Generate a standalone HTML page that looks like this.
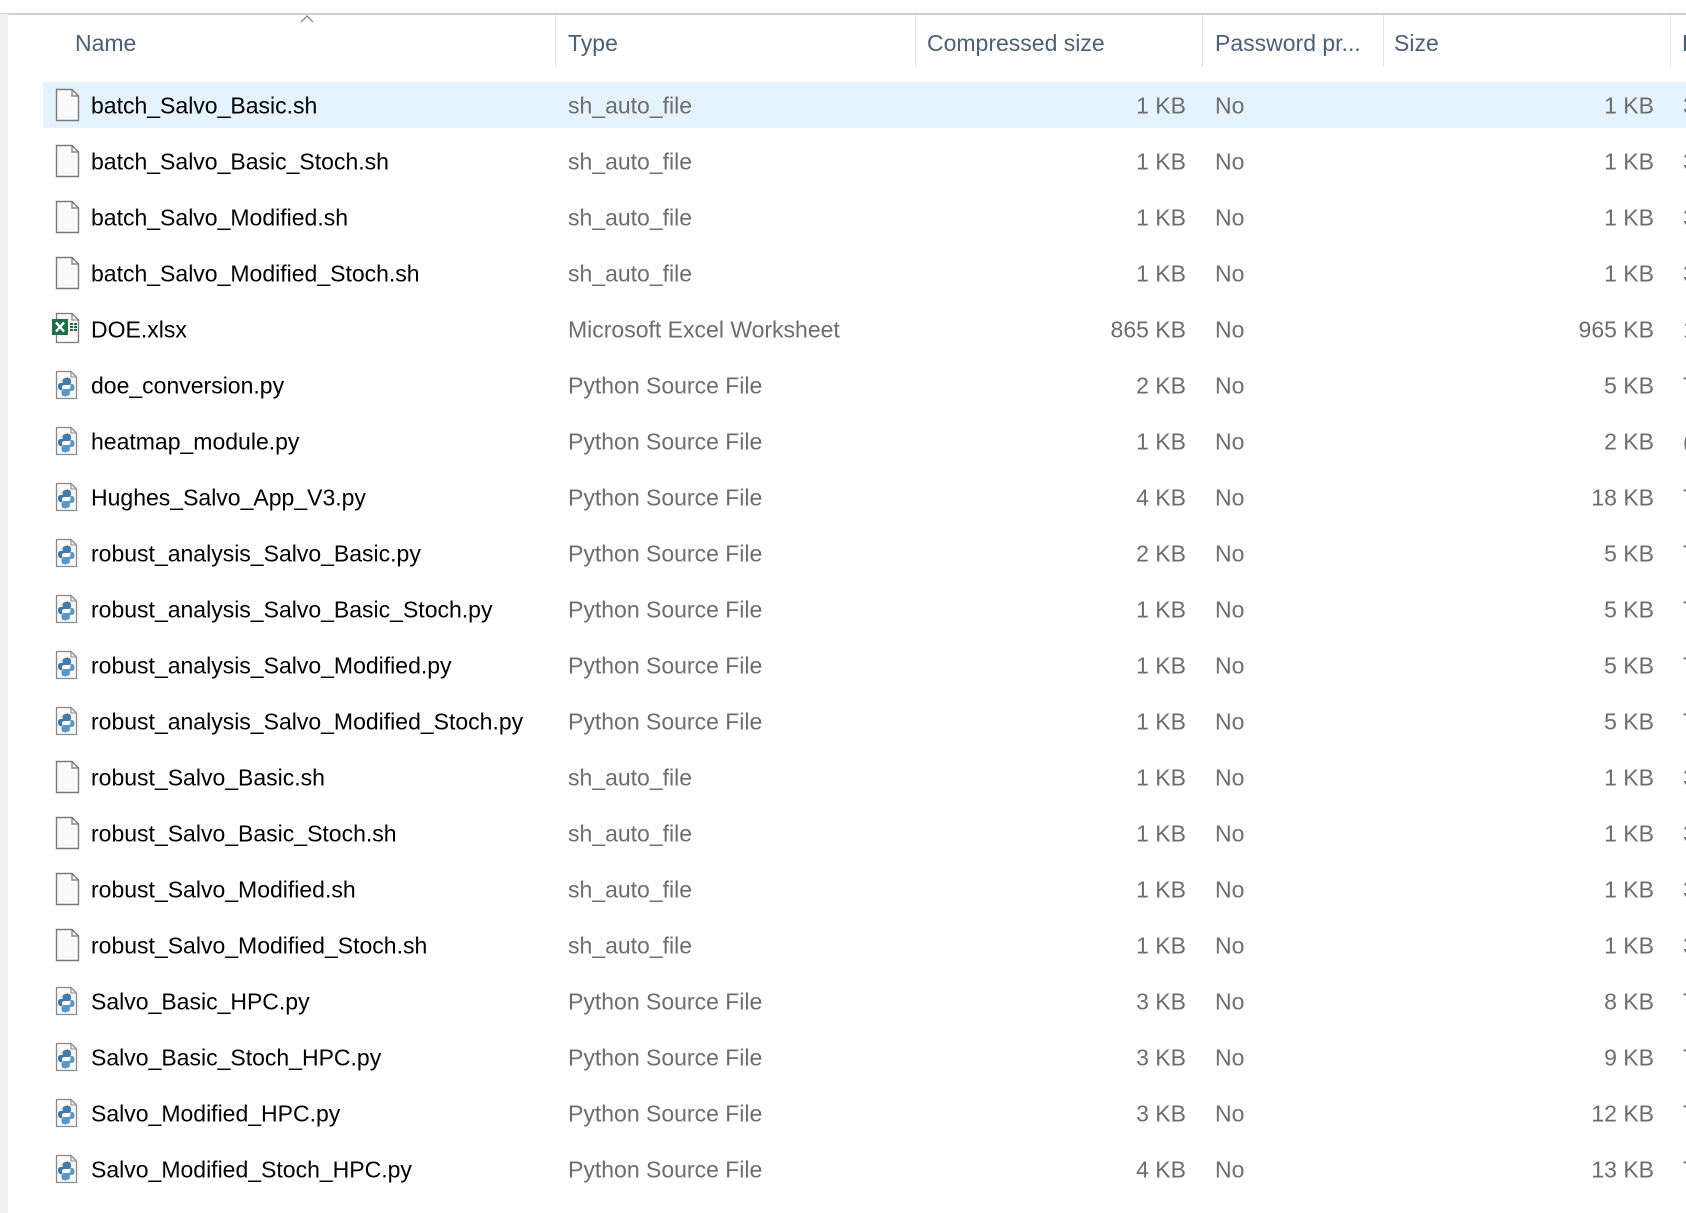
<!DOCTYPE html>
<html><head><meta charset="utf-8">
<style>
html,body{margin:0;padding:0;width:1686px;height:1213px;overflow:hidden;background:#fff;font-family:"Liberation Sans",sans-serif;}
.strip{position:absolute;left:0;top:14px;width:8px;height:1199px;background:#f0f0f0;}
.topline{position:absolute;left:0;top:13px;width:1686px;height:2px;background:#c9d4e0;}
.hdr{position:absolute;top:30px;font-size:23px;color:#4c607a;white-space:nowrap;}
.sep{position:absolute;top:15px;width:1px;height:52px;background:#e5e5e5;}
.row{position:absolute;left:0;width:1686px;height:46px;}
.sel{background:#e5f3ff;left:43px;width:1643px;}
.t{position:absolute;top:50%;transform:translateY(-50%);margin-top:1px;font-size:23px;white-space:nowrap;line-height:1;}
.n{left:91px;color:#000;}
.ty{left:568px;color:#6d6d6d;}
.cs{right:500px;color:#6d6d6d;}
.pw{left:1215px;color:#6d6d6d;}
.sz{right:32px;color:#6d6d6d;}
.dt{left:1683px;color:#6d6d6d;}
.ic{position:absolute;left:50px;top:50%;transform:translateY(-50%);}
</style></head><body>
<div class="topline"></div>
<div class="strip"></div>
<svg style="position:absolute;left:300px;top:14px" width="14" height="9"><path d="M1 8 L7 2 L13 8" fill="none" stroke="#8a8a8a" stroke-width="1.3"/></svg>
<div class="hdr" style="left:75px">Name</div>
<div class="sep" style="left:555px"></div>
<div class="hdr" style="left:568px">Type</div>
<div class="sep" style="left:915px"></div>
<div class="hdr" style="left:927px">Compressed size</div>
<div class="sep" style="left:1202px"></div>
<div class="hdr" style="left:1215px">Password pr...</div>
<div class="sep" style="left:1383px"></div>
<div class="hdr" style="left:1394px">Size</div>
<div class="sep" style="left:1670px"></div>
<div class="hdr" style="left:1682px">D</div>
<div id="rows"></div>
<script>
var sh='<svg class="ic" width="32" height="34" viewBox="0 0 32 34"><path d="M6.5 1.5 H22 L28.5 8 V32.5 H6.5 Z" fill="#fafafa" stroke="#7a7a7a" stroke-width="1.4"/><path d="M22 1.5 V8 H28.5" fill="none" stroke="#7a7a7a" stroke-width="1.2"/></svg>';
var py='<svg class="ic" width="32" height="34" viewBox="0 0 32 34"><path d="M6.5 3.5 H21 L26.5 9 V30.5 H6.5 Z" fill="#fafafa" stroke="#8a8a8a" stroke-width="1.3"/><path d="M21 3.5 V9 H26.5" fill="none" stroke="#8a8a8a" stroke-width="1.1"/><path d="M16.5 10 c-3 0 -4 1 -4 3 v2 h-2 c-2 0 -2.5 2 -2.5 3.5 s0.5 3.5 2.5 3.5 h1.5 v-2.5 c0-1.5 1-2.5 2.5-2.5 h4 c1.5 0 2.5-1 2.5-2.5 v-2 c0-2-1.5-3-4.5-3 z" fill="#3f7cad"/><path d="M16 28 c3 0 4-1 4-3 v-2 h2 c2 0 2.5-2 2.5-3.5 s-0.5-3.5-2.5-3.5 h-1.5 v2.5 c0 1.5-1 2.5-2.5 2.5 h-4 c-1.5 0-2.5 1-2.5 2.5 v2 c0 2 1.5 3 4.5 3 z" fill="#5d97c4"/></svg>';
var xl='<svg class="ic" width="32" height="34" viewBox="0 0 32 34"><path d="M6.5 1.5 H22 L28.5 8 V30.5 H6.5 Z" fill="#fafafa" stroke="#7a7a7a" stroke-width="1.3"/><path d="M22 1.5 V8 H28.5" fill="none" stroke="#7a7a7a" stroke-width="1.1"/><g fill="#1e7145"><rect x="20" y="11" width="3" height="2"/><rect x="24" y="11" width="3" height="2"/><rect x="20" y="14" width="3" height="2"/><rect x="24" y="14" width="3" height="2"/><rect x="20" y="17" width="3" height="2"/><rect x="24" y="17" width="3" height="2"/></g><rect x="2" y="7" width="16" height="16" fill="#1e7145"/><path d="M6 10.5 L14 19.5 M14 10.5 L6 19.5" stroke="#fff" stroke-width="2.4"/></svg>';
var d=[
['batch_Salvo_Basic.sh','sh','1','1','3'],
['batch_Salvo_Basic_Stoch.sh','sh','1','1','3'],
['batch_Salvo_Modified.sh','sh','1','1','3'],
['batch_Salvo_Modified_Stoch.sh','sh','1','1','3'],
['DOE.xlsx','xl','865','965','1'],
['doe_conversion.py','py','2','5','T'],
['heatmap_module.py','py','1','2','('],
['Hughes_Salvo_App_V3.py','py','4','18','T'],
['robust_analysis_Salvo_Basic.py','py','2','5','T'],
['robust_analysis_Salvo_Basic_Stoch.py','py','1','5','T'],
['robust_analysis_Salvo_Modified.py','py','1','5','T'],
['robust_analysis_Salvo_Modified_Stoch.py','py','1','5','T'],
['robust_Salvo_Basic.sh','sh','1','1','3'],
['robust_Salvo_Basic_Stoch.sh','sh','1','1','3'],
['robust_Salvo_Modified.sh','sh','1','1','3'],
['robust_Salvo_Modified_Stoch.sh','sh','1','1','3'],
['Salvo_Basic_HPC.py','py','3','8','T'],
['Salvo_Basic_Stoch_HPC.py','py','3','9','T'],
['Salvo_Modified_HPC.py','py','3','12','T'],
['Salvo_Modified_Stoch_HPC.py','py','4','13','T']];
var h='';
for(var i=0;i<d.length;i++){var r=d[i];var y=105+i*56-23;
var ic=r[1]=='sh'?sh:(r[1]=='py'?py:xl);
var ty=r[1]=='sh'?'sh_auto_file':(r[1]=='py'?'Python Source File':'Microsoft Excel Worksheet');
h+='<div class="row'+(i==0?' sel':'')+'" style="top:'+y+'px">'+'<div style="position:absolute;left:'+(i==0?-43:0)+'px;top:0;width:1686px;height:46px">'+ic+
'<div class="t n">'+r[0]+'</div><div class="t ty">'+ty+'</div><div class="t cs">'+r[2]+' KB</div><div class="t pw">No</div><div class="t sz">'+r[3]+' KB</div><div class="t dt">'+r[4]+'</div></div></div>';}
document.getElementById('rows').innerHTML=h;
</script>
</body></html>
